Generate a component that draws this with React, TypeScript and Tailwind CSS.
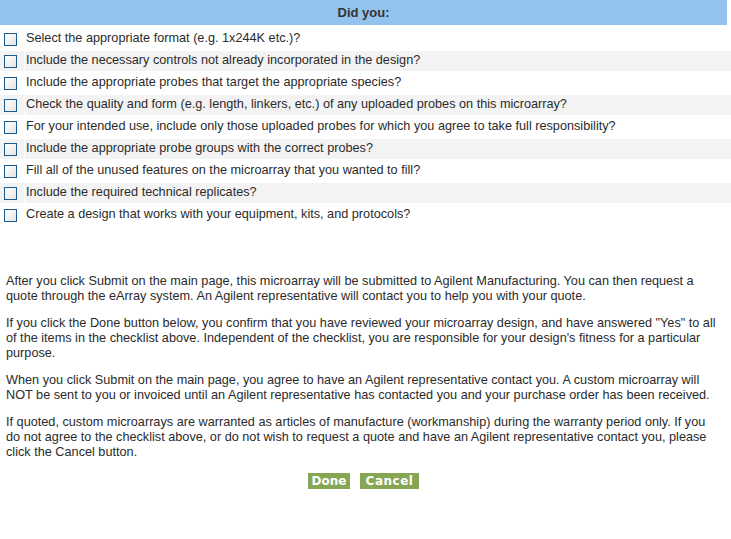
import React from "react";

const items = [
  "Select the appropriate format (e.g. 1x244K etc.)?",
  "Include the necessary controls not already incorporated in the design?",
  "Include the appropriate probes that target the appropriate species?",
  "Check the quality and form (e.g. length, linkers, etc.) of any uploaded probes on this microarray?",
  "For your intended use, include only those uploaded probes for which you agree to take full responsibility?",
  "Include the appropriate probe groups with the correct probes?",
  "Fill all of the unused features on the microarray that you wanted to fill?",
  "Include the required technical replicates?",
  "Create a design that works with your equipment, kits, and protocols?",
];

function Box() {
  return (
    <span className="block w-[13px] h-[13px] border-[1.5px] border-[#1d5a8e] bg-gradient-to-br from-white to-[#e4e4e4]" />
  );
}

export default function App() {
  return (
    <div className="w-[731px] h-[539px] bg-white text-[#2b2b2b] font-['Liberation_Sans',Arial,sans-serif] text-[12.7px]">
      <div className="w-[727px] h-[25px] bg-[#93c3ec] flex items-center justify-center font-bold text-[13px] text-[#333]">
        Did you:
      </div>
      <div className="pt-[4px] flex flex-col gap-[2px]">
        {items.map((t, i) => (
          <div key={i} className="flex h-[20px] gap-[1px]">
            <div className={`w-[24px] flex items-center pl-[4px] ${i % 2 === 1 ? "bg-[#f3f3f3]" : ""}`}>
              <Box />
            </div>
            <div className={`flex-1 flex items-center pl-[1px] ${i % 2 === 1 ? "bg-[#f3f3f3]" : ""}`}>
              {t}
            </div>
          </div>
        ))}
      </div>
      <div className="pl-[6px] pr-[12px] pt-[49px] leading-[15px] flex flex-col gap-[12px]">
        <p>
          After you click Submit on the main page, this microarray will be submitted to Agilent Manufacturing. You can then request a quote through the eArray system. An Agilent representative will contact you to help you with your quote.
        </p>
        <p>
          If you click the Done button below, you confirm that you have reviewed your microarray design, and have answered "Yes" to all of the items in the checklist above. Independent of the checklist, you are responsible for your design's fitness for a particular purpose.
        </p>
        <p>
          When you click Submit on the main page, you agree to have an Agilent representative contact you. A custom microarray will NOT be sent to you or invoiced until an Agilent representative has contacted you and your purchase order has been received.
        </p>
        <p>
          If quoted, custom microarrays are warranted as articles of manufacture (workmanship) during the warranty period only. If you do not agree to the checklist above, or do not wish to request a quote and have an Agilent representative contact you, please click the Cancel button.
        </p>
      </div>
      <div className="flex justify-center gap-[10px] pt-[13px] pr-[4px]">
        <button className="w-[42px] h-[16px] bg-[#87a654] text-white font-bold text-[12px] font-['DejaVu_Sans',Verdana,sans-serif] leading-[16px] text-center">
          Done
        </button>
        <button className="w-[59px] h-[16px] bg-[#87a654] text-white font-bold text-[12px] font-['DejaVu_Sans',Verdana,sans-serif] leading-[16px] text-center tracking-[0.5px]">
          Cancel
        </button>
      </div>
    </div>
  );
}
